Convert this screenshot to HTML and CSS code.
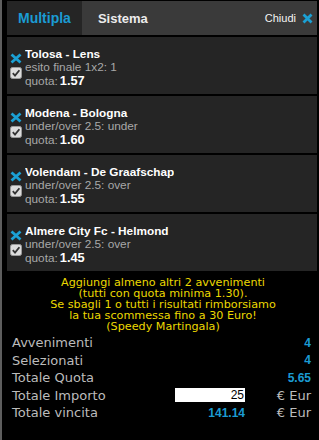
FILE: index.html
```html
<!DOCTYPE html>
<html lang="it">
<head>
<meta charset="utf-8">
<title>Schedina</title>
<link rel="stylesheet" href="styles.css">
</head>
<body>
<div class="edge"></div>
<div class="panel">
  <div class="header">
    <div class="tab active">Multipla</div>
    <div class="tab">Sistema</div>
    <div class="close">Chiudi
      <svg class="xicon" width="11" height="11" viewBox="0 0 11 11"><path d="M1.5 1.5 L9.5 9.5 M9.5 1.5 L1.5 9.5" stroke="#1ba0d4" stroke-width="2.8" fill="none"/></svg>
    </div>
  </div>

  <div class="item">
    <div class="icons">
      <svg width="12" height="11" viewBox="0 0 12 11"><path d="M1.5 1.5 L10.5 9.5 M10.5 1.5 L1.5 9.5" stroke="#1ba0d4" stroke-width="2.8" fill="none"/></svg>
      <svg width="12" height="12" viewBox="0 0 12 12"><rect x="0.5" y="0.5" width="11" height="11" rx="2" fill="#dcdcdc" stroke="#9a9a9a"/><path d="M2.8 6.2 L5 8.6 L9.4 3.2" stroke="#333" stroke-width="1.8" fill="none"/></svg>
    </div>
    <div class="info">
      <div class="title">Tolosa - Lens</div>
      <div class="sub">esito finale 1x2: 1</div>
      <div class="sub">quota:<b>1.57</b></div>
    </div>
  </div>

  <div class="item">
    <div class="icons">
      <svg width="12" height="11" viewBox="0 0 12 11"><path d="M1.5 1.5 L10.5 9.5 M10.5 1.5 L1.5 9.5" stroke="#1ba0d4" stroke-width="2.8" fill="none"/></svg>
      <svg width="12" height="12" viewBox="0 0 12 12"><rect x="0.5" y="0.5" width="11" height="11" rx="2" fill="#dcdcdc" stroke="#9a9a9a"/><path d="M2.8 6.2 L5 8.6 L9.4 3.2" stroke="#333" stroke-width="1.8" fill="none"/></svg>
    </div>
    <div class="info">
      <div class="title">Modena - Bologna</div>
      <div class="sub">under/over 2.5: under</div>
      <div class="sub">quota:<b>1.60</b></div>
    </div>
  </div>

  <div class="item">
    <div class="icons">
      <svg width="12" height="11" viewBox="0 0 12 11"><path d="M1.5 1.5 L10.5 9.5 M10.5 1.5 L1.5 9.5" stroke="#1ba0d4" stroke-width="2.8" fill="none"/></svg>
      <svg width="12" height="12" viewBox="0 0 12 12"><rect x="0.5" y="0.5" width="11" height="11" rx="2" fill="#dcdcdc" stroke="#9a9a9a"/><path d="M2.8 6.2 L5 8.6 L9.4 3.2" stroke="#333" stroke-width="1.8" fill="none"/></svg>
    </div>
    <div class="info">
      <div class="title">Volendam - De Graafschap</div>
      <div class="sub">under/over 2.5: over</div>
      <div class="sub">quota:<b>1.55</b></div>
    </div>
  </div>

  <div class="item">
    <div class="icons">
      <svg width="12" height="11" viewBox="0 0 12 11"><path d="M1.5 1.5 L10.5 9.5 M10.5 1.5 L1.5 9.5" stroke="#1ba0d4" stroke-width="2.8" fill="none"/></svg>
      <svg width="12" height="12" viewBox="0 0 12 12"><rect x="0.5" y="0.5" width="11" height="11" rx="2" fill="#dcdcdc" stroke="#9a9a9a"/><path d="M2.8 6.2 L5 8.6 L9.4 3.2" stroke="#333" stroke-width="1.8" fill="none"/></svg>
    </div>
    <div class="info">
      <div class="title">Almere City Fc - Helmond</div>
      <div class="sub">under/over 2.5: over</div>
      <div class="sub">quota:<b>1.45</b></div>
    </div>
  </div>

  <div class="footer">
    <div class="message">
      <div class="mline">Aggiungi almeno altri 2 avvenimenti</div>
      <div class="mline">(tutti con quota minima 1.30).</div>
      <div class="mline">Se sbagli 1 o tutti i risultati rimborsiamo</div>
      <div class="mline">la tua scommessa fino a 30 Euro!</div>
      <div class="mline">(Speedy Martingala)</div>
    </div>
    <div class="stats">
      <div class="label">Avvenimenti</div><div class="val wide">4</div>
      <div class="label">Selezionati</div><div class="val wide">4</div>
      <div class="label">Totale Quota</div><div class="val wide">5.65</div>
      <div class="label">Totale Importo</div><div class="inputcell"><input class="amount" type="text" value="25"></div><div class="unit">€ Eur</div>
      <div class="label">Totale vincita</div><div class="val">141.14</div><div class="unit">€ Eur</div>
    </div>
  </div>
</div>
</body>
</html>
```

FILE: styles.css
```css
html, body {
  margin: 0;
  padding: 0;
  background: #000;
}
body {
  display: flex;
  height: 440px;
  overflow: hidden;
  padding-top: 1px;
  box-sizing: border-box;
}
.edge {
  width: 2px;
  background: #5e5e5e;
  margin-top: -1px;
  margin-right: 5px;
  flex: none;
}
.panel {
  width: 310px;
  flex: none;
  display: flex;
  flex-direction: column;
  font-family: "Liberation Sans", Arial, sans-serif;
}
.header {
  height: 34px;
  background: #3a3a3a;
  border-bottom: 2px solid #000;
  display: flex;
  align-items: stretch;
}
.tab {
  display: flex;
  align-items: center;
  padding: 0 16px;
  font-weight: bold;
  font-size: 13px;
  color: #ececec;
}
.tab.active {
  background: #252525;
  color: #1b9bd3;
  font-size: 14px;
  padding: 0 11px;
}
.close {
  margin-left: auto;
  display: flex;
  align-items: center;
  gap: 6px;
  padding-right: 4px;
  font-size: 11px;
  color: #f4f4f4;
}
.item {
  height: 57px;
  background: #252525;
  border-bottom: 2px solid #000;
  display: flex;
}
.icons {
  width: 15px;
  padding-left: 3px;
  padding-top: 16px;
  display: flex;
  flex-direction: column;
  gap: 3px;
}
.icons svg {
  display: block;
}
.info {
  padding-top: 10px;
  white-space: nowrap;
  overflow: hidden;
}
.title {
  font-size: 11.8px;
  font-weight: bold;
  color: #fff;
  line-height: 14px;
}
.sub {
  font-size: 11.8px;
  color: #a8a8a8;
  line-height: 13px;
}
.sub b {
  color: #fff;
  font-weight: bold;
  font-size: 12.8px;
  margin-left: 2px;
}
.footer {
  flex: 1;
  background: #000;
}
.message {
  padding-top: 4px;
  padding-left: 2px;
  text-align: center;
  font-family: "DejaVu Sans", Verdana, sans-serif;
  font-size: 11.2px;
  color: #ecd800;
}
.mline {
  height: 11px;
  line-height: 11px;
  white-space: nowrap;
}
.stats {
  margin-top: 2px;
  padding: 0 6px 0 5px;
  display: grid;
  grid-template-columns: 1fr 70px 66px;
  grid-auto-rows: 17.5px;
  align-items: center;
  font-family: "DejaVu Sans", Verdana, sans-serif;
  font-size: 13px;
  color: #bcbcbc;
}
.label {
  grid-column: 1;
}
.val {
  text-align: right;
  font-family: "Liberation Sans", Arial, sans-serif;
  font-weight: bold;
  font-size: 12px;
  color: #1b9bd3;
}
.val.wide {
  grid-column: 2 / 4;
}
.unit {
  text-align: right;
}
.inputcell {
  display: flex;
}
.amount {
  width: 70px;
  height: 14px;
  box-sizing: border-box;
  border: none;
  margin: 0;
  padding: 0 1px 0 0;
  background: #fff;
  color: #000;
  text-align: right;
  font-family: "Liberation Sans", Arial, sans-serif;
  font-size: 12px;
  outline: none;
}
```
